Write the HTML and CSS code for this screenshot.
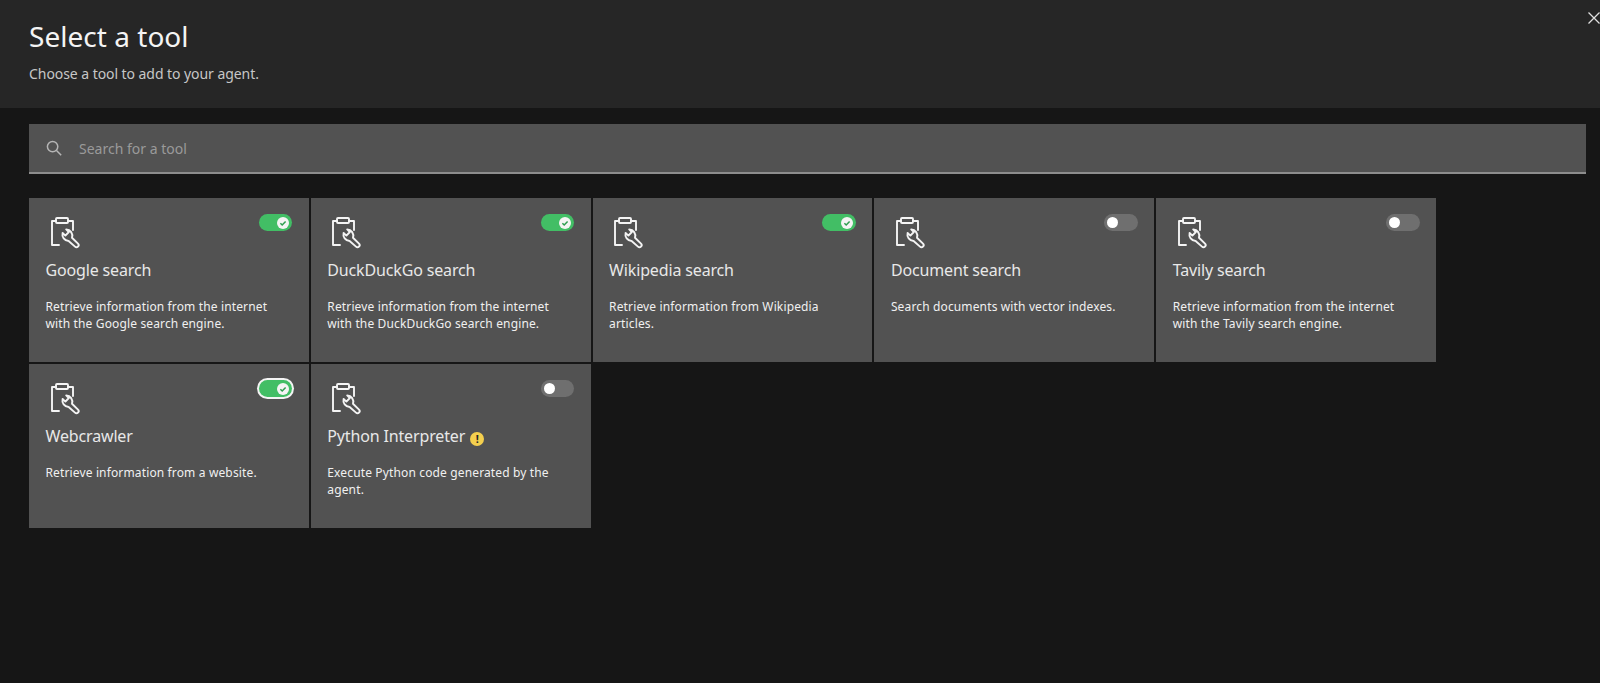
FILE: index.html
```html
<!DOCTYPE html>
<html lang="en">
<head>
<meta charset="utf-8">
<title>Select a tool</title>
<link rel="stylesheet" href="styles.css">
</head>
<body>
<svg class="sprite" width="0" height="0" aria-hidden="true">
  <symbol id="tool" viewBox="0 0 36 36">
    <g fill="none" stroke="currentColor" stroke-width="1.9" stroke-linejoin="round" stroke-linecap="round">
      <rect x="10" y="4" width="12" height="5" rx="1"/>
      <path d="M10 7H6V31H13M22 7H27V16"/>
      <path d="M20.2 15.4 22.8 18 19.4 21.6 16.6 19A6.4 6.4 0 0 0 22.6 27L29 32.6A2 2 0 0 0 32 29.6L26 23.8A6.4 6.4 0 0 0 20.2 15.4Z"/>
    </g>
  </symbol>
  <symbol id="check" viewBox="0 0 12 12">
    <circle cx="6" cy="6" r="6" fill="#f4f4f4"/>
    <path d="M3.4 6.2 5.2 8 8.6 4.4" fill="none" stroke="#2f9e50" stroke-width="1.5"/>
  </symbol>
</svg>

<header class="head">
  <h1 class="title">Select a tool</h1>
  <p class="subtitle">Choose a tool to add to your agent.</p>
  <svg class="close" width="16" height="16" viewBox="0 0 16 16" aria-label="Close"><path d="M2.5 2.5 13.5 13.5M13.5 2.5 2.5 13.5" stroke="#e0e0e0" stroke-width="1.3" fill="none"/></svg>
</header>

<main class="main">
  <div class="search">
    <svg class="search-icon" width="16" height="16" viewBox="0 0 16 16"><circle cx="6.6" cy="6.6" r="5.2" fill="none" stroke="#b5b5b5" stroke-width="1.5"/><path d="M10.5 10.5 15.2 15.2" stroke="#b5b5b5" stroke-width="1.5"/></svg>
    <span class="placeholder">Search for a tool</span>
  </div>

  <div class="grid">
    <article class="card">
      <div class="card-top"><svg class="tool-icon"><use href="#tool"/></svg><span class="toggle on"><svg class="knob"><use href="#check"/></svg></span></div>
      <h2 class="card-title">Google search</h2>
      <p class="card-desc">Retrieve information from the internet with the Google search engine.</p>
    </article>
    <article class="card">
      <div class="card-top"><svg class="tool-icon"><use href="#tool"/></svg><span class="toggle on"><svg class="knob"><use href="#check"/></svg></span></div>
      <h2 class="card-title">DuckDuckGo search</h2>
      <p class="card-desc">Retrieve information from the internet with the DuckDuckGo search engine.</p>
    </article>
    <article class="card">
      <div class="card-top"><svg class="tool-icon"><use href="#tool"/></svg><span class="toggle on"><svg class="knob"><use href="#check"/></svg></span></div>
      <h2 class="card-title">Wikipedia search</h2>
      <p class="card-desc">Retrieve information from Wikipedia articles.</p>
    </article>
    <article class="card">
      <div class="card-top"><svg class="tool-icon"><use href="#tool"/></svg><span class="toggle"><span class="dot"></span></span></div>
      <h2 class="card-title">Document search</h2>
      <p class="card-desc">Search documents with vector indexes.</p>
    </article>
    <article class="card">
      <div class="card-top"><svg class="tool-icon"><use href="#tool"/></svg><span class="toggle"><span class="dot"></span></span></div>
      <h2 class="card-title">Tavily search</h2>
      <p class="card-desc">Retrieve information from the internet with the Tavily search engine.</p>
    </article>
    <article class="card">
      <div class="card-top"><svg class="tool-icon"><use href="#tool"/></svg><span class="toggle on focus"><svg class="knob"><use href="#check"/></svg></span></div>
      <h2 class="card-title">Webcrawler</h2>
      <p class="card-desc">Retrieve information from a website.</p>
    </article>
    <article class="card">
      <div class="card-top"><svg class="tool-icon"><use href="#tool"/></svg><span class="toggle"><span class="dot"></span></span></div>
      <h2 class="card-title">Python Interpreter <span class="warn">!</span></h2>
      <p class="card-desc">Execute Python code generated by the agent.</p>
    </article>
  </div>
</main>
</body>
</html>
```

FILE: styles.css
```css
* { box-sizing: border-box; }
html, body { margin: 0; height: 100%; }
body {
  background: #161616;
  color: #f4f4f4;
  font-family: "Noto Sans", "Open Sans", "Liberation Sans", sans-serif;
  overflow: hidden;
}
.sprite { position: absolute; }
.head {
  position: relative;
  height: 108px;
  background: #262626;
  padding: 17px 29px 0;
}
.title {
  margin: 0;
  font-size: 28px;
  line-height: 38px;
  font-weight: 400;
  letter-spacing: 0.03px;
  color: #f4f4f4;
}
.subtitle {
  margin: 10px 0 0;
  font-size: 14px;
  line-height: 18px;
  letter-spacing: -0.06px;
  color: #c6c6c6;
}
.close { position: absolute; top: 10px; right: -2px; }
.main { padding: 16px 14px 0 29px; }
.search {
  display: flex;
  align-items: center;
  height: 50px;
  background: #525252;
  border-bottom: 2px solid #8d8d8d;
  padding-left: 17px;
}
.search-icon { flex: none; margin-right: 17px; }
.placeholder { font-size: 14px; color: #9a9a9a; }
.grid {
  display: grid;
  grid-template-columns: repeat(5, 279.8px);
  grid-auto-rows: 164px;
  gap: 2px;
  margin-top: 24px;
}
.card {
  background: #525252;
  padding: 16px 17px 0 16.5px;
}
.card-top {
  display: flex;
  justify-content: space-between;
  align-items: flex-start;
  height: 36px;
}
.tool-icon { width: 36px; height: 36px; color: #f4f4f4; }
.toggle {
  display: flex;
  align-items: center;
  width: 33.5px;
  height: 17px;
  margin-right: -0.6px;
  border-radius: 9px;
  background: #6f6f6f;
  padding: 0 3px;
}
.toggle.on { background: #42be65; justify-content: flex-end; }
.toggle.focus { box-shadow: 0 0 0 2px #f4f4f4; }
.knob { width: 12px; height: 12px; }
.dot { width: 11px; height: 11px; border-radius: 50%; background: #fff; }
.card-title {
  margin: 8px 0 0;
  font-size: 16px;
  line-height: 24px;
  font-weight: 400;
  letter-spacing: -0.15px;
  color: #e8e8e8;
}
.card-desc {
  margin: 17px 0 0;
  font-size: 12px;
  line-height: 16.5px;
  letter-spacing: 0.14px;
  color: #f0f0f0;
}
.warn {
  display: inline-flex;
  align-items: center;
  justify-content: center;
  width: 14px;
  height: 14px;
  margin-left: 1px;
  border-radius: 50%;
  background: #f4cf4e;
  color: #262626;
  font-size: 11px;
  font-weight: 700;
  line-height: 14px;
  vertical-align: -1px;
}
```
